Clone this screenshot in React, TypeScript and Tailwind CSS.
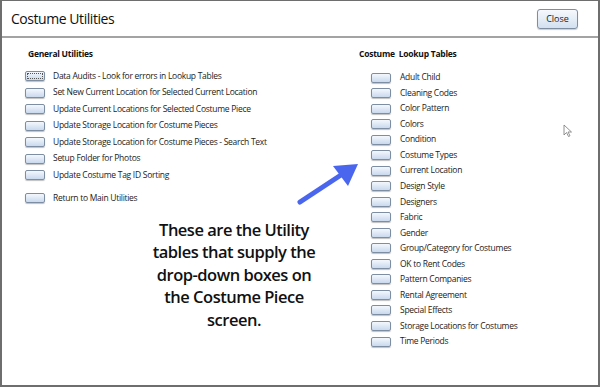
const general = [
  "Data Audits - Look for errors in Lookup Tables",
  "Set New Current Location for Selected Current Location",
  "Update Current Locations for Selected Costume Piece",
  "Update Storage Location for Costume Pieces",
  "Update Storage Location for Costume Pieces - Search Text",
  "Setup Folder for Photos",
  "Update Costume Tag ID Sorting",
];

const lookups = [
  "Adult Child",
  "Cleaning Codes",
  "Color Pattern",
  "Colors",
  "Condition",
  "Costume Types",
  "Current Location",
  "Design Style",
  "Designers",
  "Fabric",
  "Gender",
  "Group/Category for Costumes",
  "OK to Rent Codes",
  "Pattern Companies",
  "Rental Agreement",
  "Special Effects",
  "Storage Locations for Costumes",
  "Time Periods",
];

const note = [
  "These are the Utility",
  "tables that supply the",
  "drop-down boxes on",
  "the Costume Piece",
  "screen.",
];

const font = { fontFamily: '"Open Sans", "Noto Sans", sans-serif' };

const Btn = ({ focus }: { focus?: boolean }) => (
  <div className="w-[20px] h-[10px] rounded-[2px] border border-[#7d8ea3] bg-gradient-to-b from-[#f4f8fd] to-[#c9d9ee] shadow-[0_1px_1px_rgba(0,0,0,0.25)] flex items-center justify-center shrink-0">
    {focus && <div className="w-[16px] h-[6px] border border-dotted border-[#555]" />}
  </div>
);

const App = () => {
  return (
    <div className="w-[600px] h-[387px] bg-white border-t border-l-2 border-r-2 border-b-2 border-[#6e6e6e] flex flex-col relative overflow-hidden" style={font}>
      <div className="h-[37px] flex items-center justify-between pl-[9px] pr-[20px] border-b-2 border-[#a3a3a3] shrink-0">
        <h1 className="text-[14px] text-[#111] tracking-[-0.45px]">Costume Utilities</h1>
        <button className="w-[41px] h-[20px] rounded-[3px] border border-[#7f8da0] bg-gradient-to-b from-[#f6f9fd] to-[#d3e0f0] text-[9px] text-[#222] shadow-[0_1px_1px_rgba(0,0,0,0.2)]">
          Close
        </button>
      </div>

      <div className="flex flex-1">
        <div className="w-[355px] pl-[23px] pt-[10px] flex flex-col">
          <h2 className="text-[8.5px] font-bold text-[#111] ml-[3px] h-[12px] leading-[12px] tracking-[-0.25px]">General Utilities</h2>
          <div className="mt-[8px] flex flex-col">
            {general.map((g, i) => (
              <div key={g} className="h-[16.5px] flex items-center gap-[8px]">
                <Btn focus={i === 0} />
                <span className="text-[8.5px] text-[#222] whitespace-nowrap tracking-[-0.28px]">{g}</span>
              </div>
            ))}
            <div className="h-[16.5px] mt-[6.5px] flex items-center gap-[8px]">
              <Btn />
              <span className="text-[8.5px] text-[#222] whitespace-nowrap tracking-[-0.28px]">Return to Main Utilities</span>
            </div>
          </div>

          <div className="mt-[12px] w-[220px] ml-[99px] flex flex-col items-center text-[16.5px] leading-[22.6px] font-semibold text-[#111] tracking-[-0.5px]">
            {note.map((n) => (
              <span key={n} className="whitespace-nowrap">{n}</span>
            ))}
          </div>
        </div>

        <div className="flex-1 pt-[10px] flex flex-col">
          <h2 className="text-[8.5px] font-bold text-[#111] ml-[2px] h-[12px] leading-[12px] whitespace-pre tracking-[-0.25px]">Costume  Lookup Tables</h2>
          <div className="mt-[10px] ml-[14px] flex flex-col">
            {lookups.map((l) => (
              <div key={l} className="h-[15.53px] flex items-center gap-[9px]">
                <Btn />
                <span className="text-[8.5px] text-[#222] whitespace-nowrap tracking-[-0.28px]">{l}</span>
              </div>
            ))}
          </div>
        </div>
      </div>

      <svg className="absolute left-[290px] top-[155px]" width="72" height="54" viewBox="0 0 72 54">
        <line x1="8" y1="46" x2="52" y2="17" stroke="#4a66ef" strokeWidth="5" strokeLinecap="round" />
        <polygon points="66,8 41,10 56,30" fill="#4a66ef" />
      </svg>

      <svg className="absolute left-[561px] top-[123px]" width="10" height="14" viewBox="0 0 10 14">
        <path d="M1 1 L1 11 L3.5 8.5 L5.5 12.5 L7 11.8 L5 8 L8.5 8 Z" fill="white" stroke="#777" strokeWidth="0.8" />
      </svg>
    </div>
  );
};

export default App;
